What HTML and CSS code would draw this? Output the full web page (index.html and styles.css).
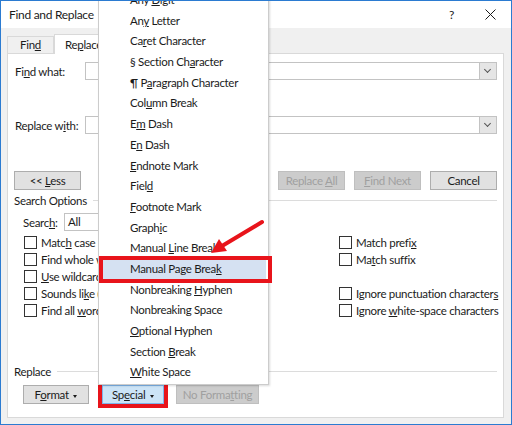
FILE: index.html
```html
<!DOCTYPE html>
<html lang="en">
<head>
    <meta charset="UTF-8">
    <title>Find and Replace</title>
    <link rel="stylesheet" href="styles.css">
</head>
<body>
    <div class="dialog">
        <div class="titlebar">
            <span class="title">Find and Replace</span>
            <span class="help">?</span>
            <svg class="close" width="11" height="11" viewBox="0 0 11 11">
                <path d="M0.5 0.5 L10.5 10.5 M10.5 0.5 L0.5 10.5" stroke="#1b1b1b" stroke-width="1" fill="none"/>
            </svg>
        </div>

        <div class="tabs">
            <div class="tab">Fin<u>d</u></div>
            <div class="tab active">Re<u>p</u>lace</div>
            <div class="tab"><u>G</u>o To</div>
        </div>

        <div class="panel">
            <div class="field-row">
                <label class="field-label">Fi<u>n</u>d what:</label>
                <div class="combo"><span class="combo-btn"></span></div>
            </div>
            <div class="field-row second">
                <label class="field-label">Replace w<u>i</u>th:</label>
                <div class="combo"><span class="combo-btn"></span></div>
            </div>

            <div class="button-row">
                <button class="btn">&lt;&lt; <u>L</u>ess</button>
                <span class="spacer"></span>
                <button class="btn" disabled>Replace <u>A</u>ll</button>
                <button class="btn" disabled><u>F</u>ind Next</button>
                <button class="btn">Cancel</button>
            </div>

            <div class="group-title"><span>Search Options</span></div>

            <div class="search-row">
                <label class="search-label">Searc<u>h</u>:</label>
                <div class="select">All</div>
            </div>

            <div class="checks">
                <div class="check"><span class="box"></span><span>Matc<u>h</u> case</span></div>
                <div class="check"><span class="box"></span><span>Match prefi<u>x</u></span></div>
                <div class="check"><span class="box"></span><span>Find whole words onl<u>y</u></span></div>
                <div class="check"><span class="box"></span><span>Ma<u>t</u>ch suffix</span></div>
                <div class="check"><span class="box"></span><span><u>U</u>se wildcards</span></div>
                <div class="check"></div>
                <div class="check"><span class="box"></span><span>Sounds li<u>k</u>e (English)</span></div>
                <div class="check"><span class="box"></span><span>Ignore punctuation character<u>s</u></span></div>
                <div class="check"><span class="box"></span><span>Find all <u>w</u>ord forms (English)</span></div>
                <div class="check"><span class="box"></span><span>Ignore <u>w</u>hite-space characters</span></div>
            </div>

            <div class="group-title replace-title"><span>Replace</span></div>

            <div class="format-row">
                <button class="btn format">F<u>o</u>rmat <span class="caret"></span></button>
                <button class="btn special">Sp<u>e</u>cial <span class="caret"></span></button>
                <button class="btn noformat" disabled>No Forma<u>t</u>ting</button>
            </div>
        </div>

        <!-- Special menu -->
        <div class="menu">
            <div class="menu-item">Any <u>D</u>igit</div>
            <div class="menu-item">An<u>y</u> Letter</div>
            <div class="menu-item">Ca<u>r</u>et Character</div>
            <div class="menu-item">§ Section Ch<u>a</u>racter</div>
            <div class="menu-item">¶ P<u>a</u>ragraph Character</div>
            <div class="menu-item">Col<u>u</u>mn Break</div>
            <div class="menu-item">E<u>m</u> Dash</div>
            <div class="menu-item">E<u>n</u> Dash</div>
            <div class="menu-item"><u>E</u>ndnote Mark</div>
            <div class="menu-item">Fiel<u>d</u></div>
            <div class="menu-item"><u>F</u>ootnote Mark</div>
            <div class="menu-item">Graph<u>i</u>c</div>
            <div class="menu-item">Manual <u>L</u>ine Break</div>
            <div class="menu-item hover">Manual Page Brea<u>k</u></div>
            <div class="menu-item">Nonbreaking <u>H</u>yphen</div>
            <div class="menu-item">Nonbreaking Space</div>
            <div class="menu-item"><u>O</u>ptional Hyphen</div>
            <div class="menu-item">Section <u>B</u>reak</div>
            <div class="menu-item"><u>W</u>hite Space</div>
        </div>

        <!-- Annotations -->
        <div class="mark"></div>
        <svg class="arrow" width="512" height="425" viewBox="0 0 512 425">
            <line x1="262" y1="222" x2="222" y2="246" stroke="#e8141b" stroke-width="4" stroke-linecap="round"/>
            <polygon points="211,253 227,251 219,239" fill="#e8141b"/>
        </svg>
    </div>
</body>
</html>
```

FILE: styles.css
```css
body {
    margin: 0;
    font-family: 'Segoe UI', 'Lato', sans-serif;
    font-size: 11.5px;
    letter-spacing: -0.3px;
    color: #1b1b1b;
}

.dialog {
    position: relative;
    width: 512px;
    height: 425px;
    box-sizing: border-box;
    border: 1px solid #2b7bd1;
    background-color: #f0f0f0;
    overflow: hidden;
}

/* Title bar */
.titlebar {
    height: 27px;
    background-color: #fff;
    display: flex;
    align-items: center;
    padding-left: 8px;
}

.title {
    font-size: 12px;
    flex: 1;
}

.help {
    font-size: 12px;
    margin-right: 31px;
}

.close {
    margin-right: 15px;
}

/* Tabs */
.tabs {
    display: flex;
    align-items: flex-end;
    height: 25px;
    padding-left: 6px;
}

.tab {
    height: 17px;
    line-height: 16px;
    padding: 0 12px;
    border: 1px solid #d9d9d9;
    border-bottom: none;
    box-sizing: border-box;
    background-color: #f0f0f0;
}

.tab.active {
    height: 20px;
    line-height: 19px;
    background-color: #fff;
    padding: 0 10px;
    margin-bottom: -1px;
    position: relative;
}

/* Tab page */
.panel {
    margin: 0 7px 0 6px;
    height: 365px;
    box-sizing: border-box;
    border: 1px solid #d9d9d9;
    background-color: #fff;
    padding: 8px 6px 0 6px;
}

.field-row {
    display: flex;
    height: 18px;
    align-items: center;
}

.field-row.second {
    margin-top: 36px;
}

.field-label {
    width: 71px;
    flex-shrink: 0;
    padding-left: 1px;
    box-sizing: border-box;
    white-space: nowrap;
}

.combo {
    flex: 1;
    height: 18px;
    box-sizing: border-box;
    border: 1px solid #c3c3c3;
    display: flex;
    justify-content: flex-end;
}

.combo-btn {
    width: 16px;
    height: 16px;
    background-color: #e5e5e5;
    border-left: 1px solid #c3c3c3;
    position: relative;
}

.combo-btn::after {
    content: "";
    position: absolute;
    left: 5px;
    top: 4px;
    width: 4px;
    height: 4px;
    border-right: 1px solid #555;
    border-bottom: 1px solid #555;
    transform: rotate(45deg);
}

/* Buttons */
.btn {
    font: inherit;
    letter-spacing: inherit;
    color: #1b1b1b;
    height: 19px;
    width: 67px;
    padding: 0;
    border: 1px solid #adadad;
    background-color: #e1e1e1;
    white-space: nowrap;
}

.btn:disabled {
    background-color: #cccccc;
    border-color: #bfbfbf;
    color: #a0a0a0;
}

.button-row {
    display: flex;
    gap: 9px;
    margin-top: 37px;
}

.spacer {
    flex: 1;
}

.group-title {
    display: flex;
    align-items: center;
    height: 14px;
    margin-top: 3px;
}

.group-title::after {
    content: "";
    flex: 1;
    height: 1px;
    background-color: #dcdcdc;
    margin-left: 6px;
}

.search-row {
    display: flex;
    align-items: center;
    height: 18px;
    margin-top: 6px;
    padding-left: 9px;
}

.search-label {
    width: 41px;
}

.select {
    width: 126px;
    height: 18px;
    line-height: 16px;
    box-sizing: border-box;
    border: 1px solid #c3c3c3;
    padding-left: 3px;
}

.checks {
    display: grid;
    grid-template-columns: 315px 1fr;
    grid-auto-rows: 17px;
    margin-top: 3px;
    padding-left: 10px;
}

.check {
    display: flex;
    align-items: center;
    white-space: nowrap;
}

.box {
    width: 11px;
    height: 11px;
    flex-shrink: 0;
    border: 1px solid #333;
    background-color: #fff;
    margin-right: 4px;
}

.replace-title {
    margin-top: 45px;
}

.format-row {
    display: flex;
    margin-top: 7px;
    padding-left: 9px;
}

.btn.format {
    width: 66px;
}

.btn.special {
    width: 62px;
    margin-left: 13px;
    background-color: #cce4f7;
    border-color: #7eb4ea;
    outline: 4px solid #e8141b;
    outline-offset: 0;
}

.btn.noformat {
    width: 83px;
    margin-left: 12px;
}

.caret {
    display: inline-block;
    width: 0;
    height: 0;
    border-left: 2.5px solid transparent;
    border-right: 2.5px solid transparent;
    border-top: 3px solid #1b1b1b;
    vertical-align: middle;
    margin-left: 2px;
}

/* Dropdown menu */
.menu {
    position: absolute;
    left: 97px;
    top: -15px;
    width: 171px;
    box-sizing: border-box;
    background-color: #fff;
    border: 1px solid #cccccc;
    box-shadow: 1px 1px 2px rgba(0, 0, 0, 0.15);
    padding: 3px 0 1px 0;
}

.menu-item {
    height: 20.7px;
    line-height: 20.7px;
    margin: 0 2px;
    padding-left: 29px;
    white-space: nowrap;
}

.menu-item.hover {
    background-color: #d5e1f2;
}

/* Red annotation marks */
.mark {
    position: absolute;
    left: 98px;
    top: 255px;
    width: 173px;
    height: 27px;
    border: 4px solid #e8141b;
    box-sizing: border-box;
}

.arrow {
    position: absolute;
    left: -1px;
    top: -1px;
    pointer-events: none;
}
```
